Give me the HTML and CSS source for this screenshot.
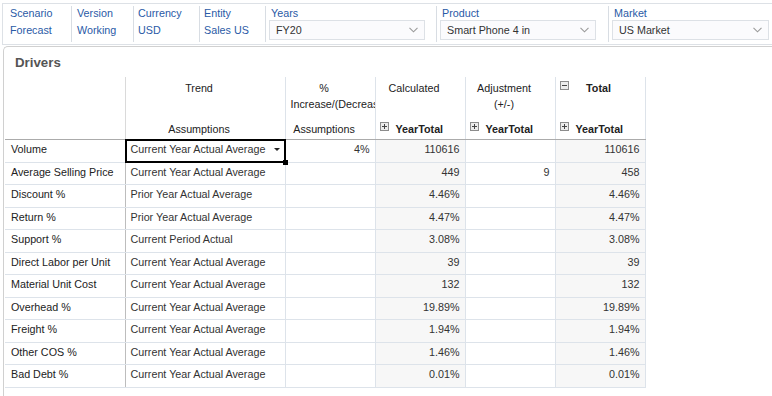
FILE: index.html
```html
<!DOCTYPE html>
<html lang="en">
<head>
    <meta charset="UTF-8">
    <meta name="viewport" content="width=device-width, initial-scale=1.0">
    <title>Drivers</title>
    <link rel="stylesheet" href="styles.css">
</head>
<body>
    <div class="pov-bar">
        <div class="pov-item pov-scenario">
            <span class="pov-label">Scenario</span>
            <span class="pov-value">Forecast</span>
        </div>
        <div class="pov-item pov-version">
            <span class="pov-label">Version</span>
            <span class="pov-value">Working</span>
        </div>
        <div class="pov-item pov-currency">
            <span class="pov-label">Currency</span>
            <span class="pov-value">USD</span>
        </div>
        <div class="pov-item pov-entity">
            <span class="pov-label">Entity</span>
            <span class="pov-value">Sales US</span>
        </div>
        <div class="pov-item pov-select pov-years">
            <span class="pov-label">Years</span>
            <div class="select-box">
                <span>FY20</span>
                <svg class="chevron" width="9" height="6" viewBox="0 0 9 6"><polyline points="0.5,0.8 4.5,4.8 8.5,0.8" fill="none" stroke="#9a9a9a" stroke-width="1.1"/></svg>
            </div>
        </div>
        <div class="pov-item pov-select pov-product">
            <span class="pov-label">Product</span>
            <div class="select-box">
                <span>Smart Phone 4 in</span>
                <svg class="chevron" width="9" height="6" viewBox="0 0 9 6"><polyline points="0.5,0.8 4.5,4.8 8.5,0.8" fill="none" stroke="#9a9a9a" stroke-width="1.1"/></svg>
            </div>
        </div>
        <div class="pov-item pov-select pov-market">
            <span class="pov-label">Market</span>
            <div class="select-box">
                <span>US Market</span>
                <svg class="chevron" width="9" height="6" viewBox="0 0 9 6"><polyline points="0.5,0.8 4.5,4.8 8.5,0.8" fill="none" stroke="#9a9a9a" stroke-width="1.1"/></svg>
            </div>
        </div>
    </div>

    <div class="panel">
        <h2 class="panel-title">Drivers</h2>
        <table class="grid">
            <colgroup>
                <col class="c-label">
                <col class="c-trend">
                <col class="c-num">
                <col class="c-num">
                <col class="c-num">
                <col class="c-num">
            </colgroup>
            <thead>
                <tr class="hd-top">
                    <th></th>
                    <th>Trend</th>
                    <th>%<span class="clip-line">Increase/(Decrease)</span></th>
                    <th>Calculated</th>
                    <th>Adjustment<br>(+/-)</th>
                    <th class="hd-total">
                        <svg class="tree-icon abs" width="9" height="9" viewBox="0 0 9 9"><rect x="0.5" y="0.5" width="8" height="8" fill="#ececec" stroke="#8c8c8c"/><line x1="2" y1="4.5" x2="7" y2="4.5" stroke="#444"/></svg>
                        Total
                    </th>
                </tr>
                <tr class="hd-bottom">
                    <th></th>
                    <th>Assumptions</th>
                    <th>Assumptions</th>
                    <th class="member"><svg class="tree-icon" width="9" height="9" viewBox="0 0 9 9"><rect x="0.5" y="0.5" width="8" height="8" fill="#ececec" stroke="#8c8c8c"/><line x1="2" y1="4.5" x2="7" y2="4.5" stroke="#444"/><line x1="4.5" y1="2" x2="4.5" y2="7" stroke="#444"/></svg>YearTotal</th>
                    <th class="member"><svg class="tree-icon" width="9" height="9" viewBox="0 0 9 9"><rect x="0.5" y="0.5" width="8" height="8" fill="#ececec" stroke="#8c8c8c"/><line x1="2" y1="4.5" x2="7" y2="4.5" stroke="#444"/><line x1="4.5" y1="2" x2="4.5" y2="7" stroke="#444"/></svg>YearTotal</th>
                    <th class="member"><svg class="tree-icon" width="9" height="9" viewBox="0 0 9 9"><rect x="0.5" y="0.5" width="8" height="8" fill="#ececec" stroke="#8c8c8c"/><line x1="2" y1="4.5" x2="7" y2="4.5" stroke="#444"/><line x1="4.5" y1="2" x2="4.5" y2="7" stroke="#444"/></svg>YearTotal</th>
                </tr>
            </thead>
            <tbody>
                <tr>
                    <td class="row-label">Volume</td>
                    <td class="trend selected">Current Year Actual Average<span class="caret"></span><span class="handle"></span></td>
                    <td class="num">4%</td>
                    <td class="num calc">110616</td>
                    <td class="num"></td>
                    <td class="num calc">110616</td>
                </tr>
                <tr>
                    <td class="row-label">Average Selling Price</td>
                    <td class="trend">Current Year Actual Average</td>
                    <td class="num"></td>
                    <td class="num calc">449</td>
                    <td class="num">9</td>
                    <td class="num calc">458</td>
                </tr>
                <tr>
                    <td class="row-label">Discount %</td>
                    <td class="trend">Prior Year Actual Average</td>
                    <td class="num"></td>
                    <td class="num calc">4.46%</td>
                    <td class="num"></td>
                    <td class="num calc">4.46%</td>
                </tr>
                <tr>
                    <td class="row-label">Return %</td>
                    <td class="trend">Prior Year Actual Average</td>
                    <td class="num"></td>
                    <td class="num calc">4.47%</td>
                    <td class="num"></td>
                    <td class="num calc">4.47%</td>
                </tr>
                <tr>
                    <td class="row-label">Support %</td>
                    <td class="trend">Current Period Actual</td>
                    <td class="num"></td>
                    <td class="num calc">3.08%</td>
                    <td class="num"></td>
                    <td class="num calc">3.08%</td>
                </tr>
                <tr>
                    <td class="row-label">Direct Labor per Unit</td>
                    <td class="trend">Current Year Actual Average</td>
                    <td class="num"></td>
                    <td class="num calc">39</td>
                    <td class="num"></td>
                    <td class="num calc">39</td>
                </tr>
                <tr>
                    <td class="row-label">Material Unit Cost</td>
                    <td class="trend">Current Year Actual Average</td>
                    <td class="num"></td>
                    <td class="num calc">132</td>
                    <td class="num"></td>
                    <td class="num calc">132</td>
                </tr>
                <tr>
                    <td class="row-label">Overhead %</td>
                    <td class="trend">Current Year Actual Average</td>
                    <td class="num"></td>
                    <td class="num calc">19.89%</td>
                    <td class="num"></td>
                    <td class="num calc">19.89%</td>
                </tr>
                <tr>
                    <td class="row-label">Freight %</td>
                    <td class="trend">Current Year Actual Average</td>
                    <td class="num"></td>
                    <td class="num calc">1.94%</td>
                    <td class="num"></td>
                    <td class="num calc">1.94%</td>
                </tr>
                <tr>
                    <td class="row-label">Other COS %</td>
                    <td class="trend">Current Year Actual Average</td>
                    <td class="num"></td>
                    <td class="num calc">1.46%</td>
                    <td class="num"></td>
                    <td class="num calc">1.46%</td>
                </tr>
                <tr>
                    <td class="row-label">Bad Debt %</td>
                    <td class="trend">Current Year Actual Average</td>
                    <td class="num"></td>
                    <td class="num calc">0.01%</td>
                    <td class="num"></td>
                    <td class="num calc">0.01%</td>
                </tr>
            </tbody>
        </table>
    </div>
</body>
</html>
```

FILE: styles.css
```css
body {
    margin: 0;
    font-family: 'Liberation Sans', Arial, sans-serif;
    font-size: 10.75px;
    color: #333;
    background: #fff;
    overflow: hidden;
}

/* point of view bar */
.pov-bar {
    display: flex;
    margin: 3px 0 0 2px;
    height: 40px;
    border: 1px solid #dde1e6;
    border-right: none;
}
.pov-item {
    display: flex;
    flex-direction: column;
    margin: 2px 0;
    padding-left: 5px;
    border-left: 1px solid #d8dde3;
    box-sizing: border-box;
}
.pov-label {
    line-height: 14px;
    color: #2a5aa6;
}
.pov-value {
    margin-top: 3px;
    line-height: 14px;
    color: #2a5aa6;
}
.pov-scenario { width: 68px; padding-left: 7px; border-left: none; }
.pov-version { width: 62px; }
.pov-currency { width: 66px; padding-left: 4px; }
.pov-entity { width: 66px; padding-left: 4px; }
.pov-years { width: 171px; }
.pov-product { width: 172px; }
.pov-market { flex: 1; }
.pov-select {
    padding-left: 3px;
}
.pov-select .pov-label {
    padding-left: 2px;
}
.select-box {
    display: flex;
    align-items: center;
    justify-content: space-between;
    width: 156px;
    height: 20px;
    box-sizing: border-box;
    padding: 0 6px 0 6px;
    border: 1px solid #dde1e6;
    background: #fbfbfd;
    color: #333;
    line-height: 18px;
}
.pov-market .select-box {
    width: 157px;
}

/* drivers panel */
.panel {
    margin: 1px 0 0 3px;
    padding-left: 1px;
    border-top: 1px solid #d0d0d0;
    border-left: 1px solid #d0d0d0;
    border-top-left-radius: 5px;
    height: 360px;
}
.panel-title {
    margin: 0;
    padding: 8px 0 0 10px;
    height: 22px;
    font-size: 13.3px;
    line-height: 16px;
    color: #555;
}

.grid {
    border-collapse: collapse;
    table-layout: fixed;
    width: 640px;
}
.c-label { width: 120px; }
.c-trend { width: 160px; }
.c-num { width: 90px; }

.grid th {
    font-weight: normal;
    color: #222;
    text-align: center;
    padding: 0 17px 0 5px;
    border-right: 1px solid #dde3ea;
    overflow: hidden;
    white-space: nowrap;
    line-height: 16px;
}
.grid th:first-child {
    border-right-color: #dadada;
}
.hd-top th {
    height: 41px;
    vertical-align: top;
    padding-top: 3px;
    box-sizing: border-box;
}
.hd-bottom th {
    height: 21px;
    vertical-align: middle;
    border-bottom: 1px solid #ababab;
}
.clip-line {
    display: block;
    text-align: left;
}
.hd-total {
    position: relative;
    font-weight: bold !important;
    padding-left: 14px !important;
}
.grid th.member {
    text-align: left;
    font-weight: bold;
    padding-left: 4px;
    padding-right: 0;
}
.tree-icon {
    vertical-align: top;
    margin: 1px 7px 0 0;
}
.tree-icon.abs {
    position: absolute;
    left: 4px;
    top: 4px;
    margin: 0;
}

.grid tbody tr {
    height: 22.5px;
}
.grid td {
    padding: 1px 5px 0;
    line-height: 16px;
    vertical-align: top;
    white-space: nowrap;
    overflow: hidden;
    border-right: 1px solid #dde3ea;
    border-bottom: 1px solid #dde3ea;
    color: #333;
}
.grid td.row-label {
    padding-left: 6px;
    color: #222;
    border-right: 1px solid #bdbdbd;
}
.grid td.num {
    text-align: right;
}
.grid td.calc {
    background: #f7f7f7;
}

/* active cell */
.grid td.selected {
    position: relative;
    overflow: visible;
}
.grid td.selected::before {
    content: "";
    position: absolute;
    left: -1px;
    top: -1px;
    right: -1px;
    bottom: -1px;
    border: 2px solid #000;
}
.caret {
    float: right;
    margin: 7px 0 0 0;
    border-left: 3.5px solid transparent;
    border-right: 3.5px solid transparent;
    border-top: 3.5px solid #222;
}
.handle {
    position: absolute;
    right: -3px;
    bottom: -3px;
    width: 5px;
    height: 5px;
    background: #000;
}
```
